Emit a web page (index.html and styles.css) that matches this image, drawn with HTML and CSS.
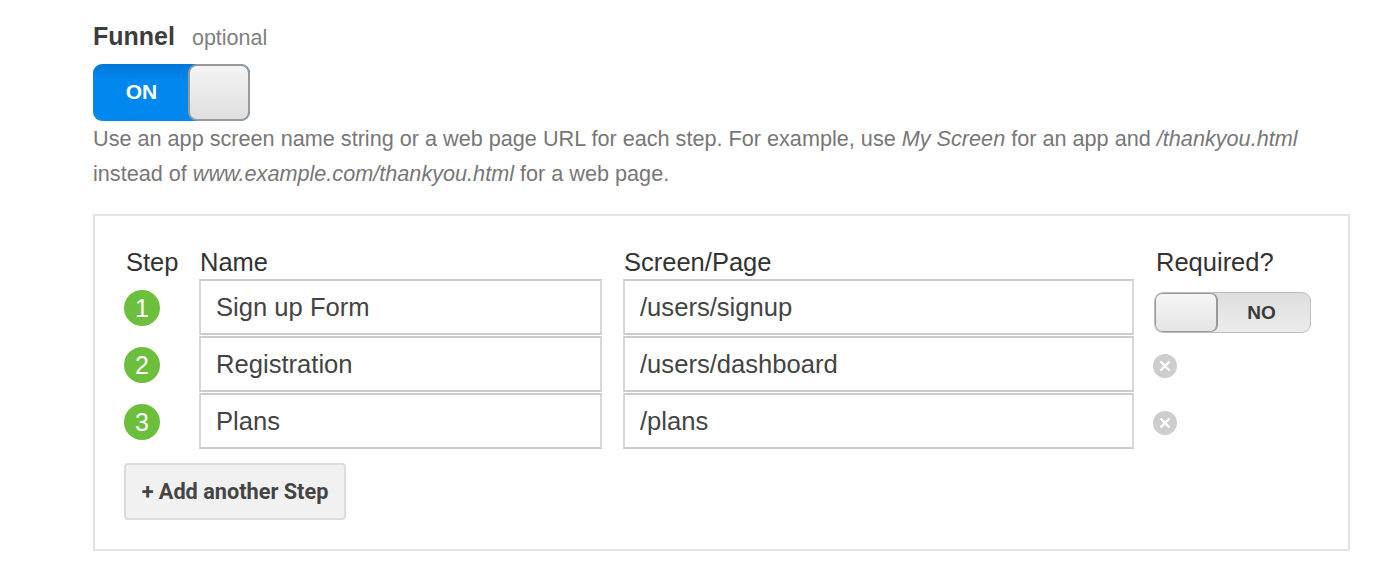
FILE: index.html
```html
<!DOCTYPE html>
<html lang="en">
<head>
    <meta charset="UTF-8">
    <meta name="viewport" content="width=device-width, initial-scale=1.0">
    <title>Funnel</title>
    <link rel="stylesheet" href="styles.css">
</head>
<body>
    <div class="container">
        <div class="heading">
            <strong>Funnel</strong>
            <span>optional</span>
        </div>
        <div class="toggle toggle-on">
            <span class="toggle-label">ON</span>
            <span class="toggle-knob"></span>
        </div>
        <p class="help">Use an app screen name string or a web page URL for each step. For example, use <em>My Screen</em> for an app and <em>/thankyou.html</em><br>instead of <em>www.example.com/thankyou.html</em> for a web page.</p>

        <div class="steps">
            <div class="steps-grid">
                <div class="col-label col-step">Step</div>
                <div class="col-label col-text">Name</div>
                <div class="col-label col-text">Screen/Page</div>
                <div class="col-label col-req">Required?</div>

                <div class="step-num first"><span>1</span></div>
                <input class="step-input" type="text" value="Sign up Form">
                <input class="step-input" type="text" value="/users/signup">
                <div class="step-req first">
                    <div class="toggle toggle-off">
                        <span class="toggle-knob"></span>
                        <span class="toggle-label">NO</span>
                    </div>
                </div>

                <div class="step-num"><span>2</span></div>
                <input class="step-input" type="text" value="Registration">
                <input class="step-input" type="text" value="/users/dashboard">
                <div class="step-req">
                    <svg class="remove" viewBox="0 0 24 24"><circle cx="12" cy="12" r="12"/><path d="M7.5 7.5l9 9M16.5 7.5l-9 9"/></svg>
                </div>

                <div class="step-num"><span>3</span></div>
                <input class="step-input" type="text" value="Plans">
                <input class="step-input" type="text" value="/plans">
                <div class="step-req">
                    <svg class="remove" viewBox="0 0 24 24"><circle cx="12" cy="12" r="12"/><path d="M7.5 7.5l9 9M16.5 7.5l-9 9"/></svg>
                </div>
            </div>
            <button class="add-step">+ Add another Step</button>
        </div>
    </div>
</body>
</html>
```

FILE: styles.css
```css
body {
    font-family: "Liberation Sans", Arial, sans-serif;
    margin: 0;
    padding: 0;
    background-color: #fff;
    color: #333;
}
.container {
    padding: 22px 50px 0 93px;
}
.heading {
    display: flex;
    align-items: baseline;
    gap: 17px;
    height: 42px;
}
.heading strong {
    font-size: 25px;
    color: #3d3d3d;
}
.heading span {
    font-size: 21.5px;
    color: #808080;
}
.toggle {
    display: flex;
    box-sizing: border-box;
    overflow: hidden;
    font-weight: bold;
}
.toggle-on {
    width: 157px;
    height: 57px;
    border-radius: 9px;
    background: linear-gradient(#0077d8, #0088ee 30%, #0088ee);
    color: #fff;
    font-size: 21px;
}
.toggle-on .toggle-label {
    width: 95px;
    padding-left: 2px;
    box-sizing: border-box;
    line-height: 56px;
    text-align: center;
}
.toggle-on .toggle-knob {
    flex: 1;
    border: 2px solid #999;
    border-radius: 9px;
    background: linear-gradient(#f4f4f4, #dfdfdf);
}
.toggle-off {
    width: 157px;
    height: 41px;
    margin-left: 1px;
    border: 1px solid #bdbdbd;
    border-radius: 9px;
    background: linear-gradient(#dedede, #ececec);
    color: #3a3a3a;
    font-size: 19px;
}
.toggle-off .toggle-knob {
    box-sizing: border-box;
    width: 63px;
    border: 1px solid #999;
    border-right-width: 2px;
    border-radius: 7px;
    background: linear-gradient(#f6f6f6, #e4e4e4);
}
.toggle-off .toggle-label {
    flex: 1;
    padding-right: 5px;
    line-height: 39px;
    text-align: center;
}
.help {
    margin: 0;
    font-size: 21.65px;
    line-height: 35px;
    color: #777;
}
.steps {
    margin-top: 23px;
    border: 2px solid #e3e3e3;
    padding: 28px 0 29px 29px;
}
.steps-grid {
    display: grid;
    grid-template-columns: 54px 403px 511px 1fr;
    column-gap: 21px;
    margin-bottom: 13px;
}
.col-label {
    padding-top: 1px;
    font-size: 25.5px;
    line-height: 34px;
    color: #333;
}
.col-step {
    padding-left: 2px;
}
.col-text {
    padding-left: 1px;
}
.col-req {
    padding-left: 1px;
}
.step-num {
    display: flex;
    align-items: center;
    padding-top: 1px;
}
.step-num.first {
    padding-top: 0;
}
.step-num span {
    flex: none;
    width: 36px;
    height: 36px;
    border-radius: 50%;
    background-color: #6cbf3c;
    color: #fff;
    font-size: 25px;
    line-height: 36px;
    text-align: center;
}
.step-input {
    box-sizing: border-box;
    width: 100%;
    height: 56px;
    margin-bottom: 1px;
    padding: 0 15px;
    font-family: inherit;
    font-size: 25.6px;
    color: #444;
    border: 2px solid #d8d8d8;
    border-top-color: #ccc;
    border-bottom-color: #ccc;
    border-radius: 0;
    outline: none;
}
.step-req {
    display: flex;
    align-items: center;
    padding-top: 3px;
    margin-left: -2px;
}
.step-req.first {
    padding-top: 10px;
}
.remove {
    width: 24px;
    height: 24px;
}
.remove circle {
    fill: #cdcdcd;
}
.remove path {
    stroke: #fff;
    stroke-width: 2.4;
    fill: none;
}
.add-step {
    display: block;
    box-sizing: border-box;
    width: 222px;
    height: 57px;
    padding: 0;
    font-family: Roboto, sans-serif;
    font-size: 21.7px;
    font-weight: bold;
    color: #444;
    background-color: #f1f1f1;
    border: 2px solid #dcdcdc;
    border-radius: 4px;
}
```
